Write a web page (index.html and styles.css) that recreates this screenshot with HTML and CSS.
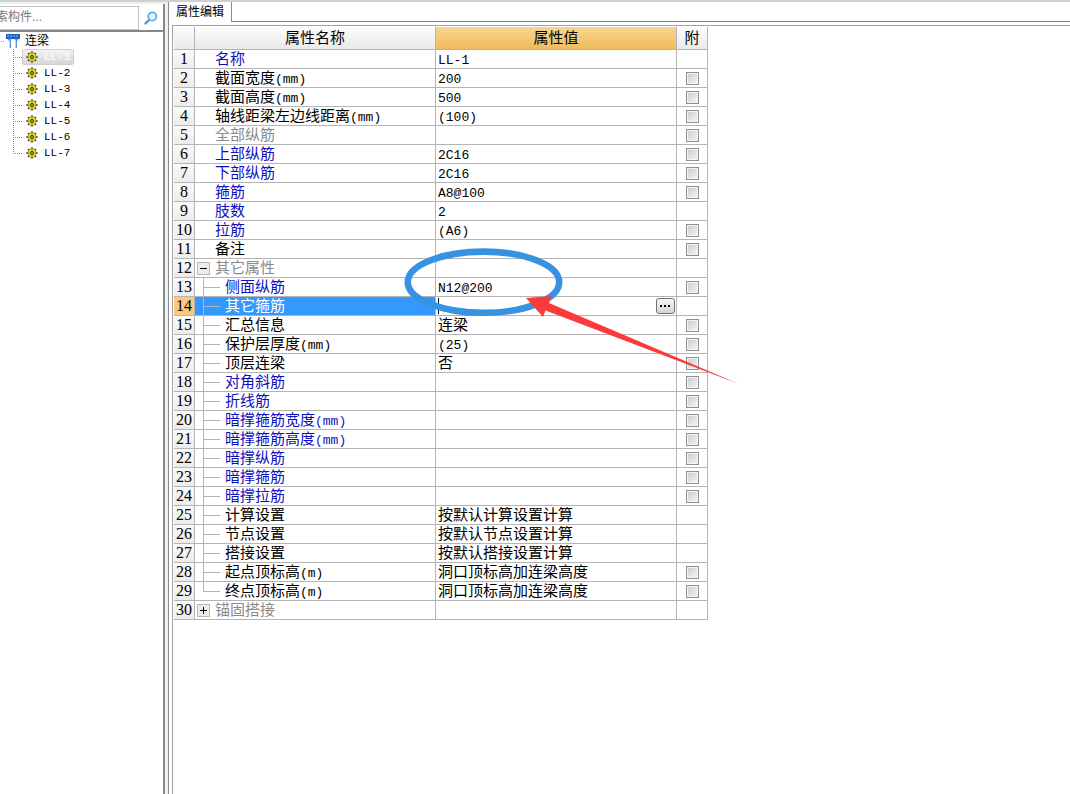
FILE: index.html
```
<!DOCTYPE html>
<html lang="zh-CN">
<head>
<meta charset="utf-8">
<title>属性编辑</title>
<link rel="stylesheet" href="styles.css">
</head>
<body>
<svg class="defs" width="0" height="0" aria-hidden="true">
  <symbol id="gear" viewBox="0 0 12 12">
    <path d="M6 0.3V11.7M0.3 6H11.7M2 2L10 10M10 2L2 10" stroke="#4a4608" stroke-width="1.5"/>
    <circle cx="6" cy="6" r="4.2" fill="#f4ea30" stroke="#6b6410" stroke-width="0.7"/>
    <path d="M6 2.2V9.8M2.2 6H9.8" stroke="#857b14" stroke-width="0.6"/>
    <rect x="4.3" y="4.3" width="3.4" height="3.4" fill="#2e2b06"/>
    <rect x="5.3" y="5.3" width="1.4" height="1.4" fill="#fff36a"/>
  </symbol>
</svg>
<div class="app">
  <aside class="side">
    <form class="search">
      <input class="search-box" type="text" placeholder="索构件..." aria-label="搜索构件">
      <button class="search-btn" type="button" aria-label="搜索">
        <svg width="14" height="14" viewBox="0 0 14 14"><path d="M1.5 12.5L5 9" stroke="#4a9bd0" stroke-width="2.4" stroke-linecap="round"/><circle cx="8.3" cy="5.5" r="4.1" fill="#e4f6fd" stroke="#5fb0df" stroke-width="1.8"/></svg>
      </button>
    </form>
    <div class="tree">
      <div class="root">
        <svg width="14" height="14" viewBox="0 0 14 14"><rect x="0" y="0" width="14" height="5" fill="#1c5fc4"/><path d="M1 2H13" stroke="#8fc3f5" stroke-dasharray="2 1"/><path d="M2 4.5H5V14H3V6.5H2ZM9 4.5H12V6.5H11V14H9Z" fill="#4f93dd"/><path d="M3.5 6V14M9.5 6V14" stroke="#b4d7f7"/></svg>
        <span>连梁</span>
      </div>
      <ul class="items">
        <li><button class="item on" type="button"><svg class="gear"><use href="#gear"/></svg>LL-1</button></li>
        <li><button class="item" type="button"><svg class="gear"><use href="#gear"/></svg>LL-2</button></li>
        <li><button class="item" type="button"><svg class="gear"><use href="#gear"/></svg>LL-3</button></li>
        <li><button class="item" type="button"><svg class="gear"><use href="#gear"/></svg>LL-4</button></li>
        <li><button class="item" type="button"><svg class="gear"><use href="#gear"/></svg>LL-5</button></li>
        <li><button class="item" type="button"><svg class="gear"><use href="#gear"/></svg>LL-6</button></li>
        <li><button class="item" type="button"><svg class="gear"><use href="#gear"/></svg>LL-7</button></li>
      </ul>
    </div>
  </aside>
  <main class="main">
    <div class="tabs"><button class="tab" type="button">属性编辑</button></div>
    <div class="pane">
      <div class="sheet">
        <table class="grid">
          <colgroup><col class="c-no"><col class="c-name"><col class="c-value"><col class="c-add"></colgroup>
          <thead><tr><th></th><th>属性名称</th><th class="active">属性值</th><th>附</th></tr></thead>
          <tbody>
            <tr><th>1</th><td class="blue">名称</td><td><i>LL-1</i></td><td></td></tr>
            <tr><th>2</th><td>截面宽度<i>(mm)</i></td><td><i>200</i></td><td><input type="checkbox" aria-label="截面宽度"></td></tr>
            <tr><th>3</th><td>截面高度<i>(mm)</i></td><td><i>500</i></td><td><input type="checkbox" aria-label="截面高度"></td></tr>
            <tr><th>4</th><td>轴线距梁左边线距离<i>(mm)</i></td><td><i>(100)</i></td><td><input type="checkbox" aria-label="轴线距梁左边线距离"></td></tr>
            <tr><th>5</th><td class="gray">全部纵筋</td><td></td><td><input type="checkbox" aria-label="全部纵筋"></td></tr>
            <tr><th>6</th><td class="blue">上部纵筋</td><td><i>2C16</i></td><td><input type="checkbox" aria-label="上部纵筋"></td></tr>
            <tr><th>7</th><td class="blue">下部纵筋</td><td><i>2C16</i></td><td><input type="checkbox" aria-label="下部纵筋"></td></tr>
            <tr><th>8</th><td class="blue">箍筋</td><td><i>A8@100</i></td><td><input type="checkbox" aria-label="箍筋"></td></tr>
            <tr><th>9</th><td class="blue">肢数</td><td><i>2</i></td><td></td></tr>
            <tr><th>10</th><td class="blue">拉筋</td><td><i>(A6)</i></td><td><input type="checkbox" aria-label="拉筋"></td></tr>
            <tr><th>11</th><td>备注</td><td></td><td><input type="checkbox" aria-label="备注"></td></tr>
            <tr><th>12</th><td class="group gray"><div><button class="toggle minus" type="button" aria-label="折叠"></button>其它属性</div></td><td></td><td></td></tr>
            <tr><th>13</th><td class="child blue">侧面纵筋</td><td><i>N12@200</i></td><td><input type="checkbox" aria-label="侧面纵筋"></td></tr>
            <tr class="selected"><th>14</th><td class="child">其它箍筋</td><td><div class="editor"><input class="edit" type="text" aria-label="其它箍筋"><button class="more" type="button" aria-label="更多"><svg width="11" height="3" viewBox="0 0 11 3"><path d="M0 0H2V2H0ZM4 0H6V2H4ZM8 0H10V2H8Z" fill="#000"/></svg></button></div></td><td></td></tr>
            <tr><th>15</th><td class="child">汇总信息</td><td>连梁</td><td><input type="checkbox" aria-label="汇总信息"></td></tr>
            <tr><th>16</th><td class="child">保护层厚度<i>(mm)</i></td><td><i>(25)</i></td><td><input type="checkbox" aria-label="保护层厚度"></td></tr>
            <tr><th>17</th><td class="child">顶层连梁</td><td>否</td><td><input type="checkbox" aria-label="顶层连梁"></td></tr>
            <tr><th>18</th><td class="child blue">对角斜筋</td><td></td><td><input type="checkbox" aria-label="对角斜筋"></td></tr>
            <tr><th>19</th><td class="child blue">折线筋</td><td></td><td><input type="checkbox" aria-label="折线筋"></td></tr>
            <tr><th>20</th><td class="child blue">暗撑箍筋宽度<i>(mm)</i></td><td></td><td><input type="checkbox" aria-label="暗撑箍筋宽度"></td></tr>
            <tr><th>21</th><td class="child blue">暗撑箍筋高度<i>(mm)</i></td><td></td><td><input type="checkbox" aria-label="暗撑箍筋高度"></td></tr>
            <tr><th>22</th><td class="child blue">暗撑纵筋</td><td></td><td><input type="checkbox" aria-label="暗撑纵筋"></td></tr>
            <tr><th>23</th><td class="child blue">暗撑箍筋</td><td></td><td><input type="checkbox" aria-label="暗撑箍筋"></td></tr>
            <tr><th>24</th><td class="child blue">暗撑拉筋</td><td></td><td><input type="checkbox" aria-label="暗撑拉筋"></td></tr>
            <tr><th>25</th><td class="child">计算设置</td><td>按默认计算设置计算</td><td></td></tr>
            <tr><th>26</th><td class="child">节点设置</td><td>按默认节点设置计算</td><td></td></tr>
            <tr><th>27</th><td class="child">搭接设置</td><td>按默认搭接设置计算</td><td></td></tr>
            <tr><th>28</th><td class="child">起点顶标高<i>(m)</i></td><td>洞口顶标高加连梁高度</td><td><input type="checkbox" aria-label="起点顶标高"></td></tr>
            <tr><th>29</th><td class="child last">终点顶标高<i>(m)</i></td><td>洞口顶标高加连梁高度</td><td><input type="checkbox" aria-label="终点顶标高"></td></tr>
            <tr><th>30</th><td class="group gray"><div><button class="toggle plus" type="button" aria-label="展开"></button>锚固搭接</div></td><td></td><td></td></tr>
          </tbody>
        </table>
        <svg class="mark" width="336" height="138" viewBox="404 248 336 138" aria-hidden="true">
          <ellipse cx="483.5" cy="282.2" rx="75.7" ry="30.6" fill="none" stroke="#3792e2" stroke-width="6.6"/>
          <path d="M526 298L552 296L549 303L739 384L545.5 310.5L543 317Z" fill="#fb3b3b"/>
        </svg>
      </div>
    </div>
  </main>
</div>
</body>
</html>
```
FILE: styles.css
```
* { box-sizing: border-box; }
body {
  margin: 0;
  background: #fff;
  color: #000;
  font: 12px/16px "Liberation Sans", "Noto Sans CJK SC", sans-serif;
}
button, input { margin: 0; padding: 0; border: 0; background: none; font: inherit; color: inherit; }
.defs { position: absolute; }
.app {
  display: flex;
  min-height: 100vh;
  border-top: 2px solid #d0d0d0;
  background: #f0f0f0;
}

/* component tree */
.side {
  flex: 0 0 165px;
  display: flex;
  flex-direction: column;
  margin-top: 2px;
  border-right: 2px solid #878b90;
  background: #fff;
}
.search {
  display: flex;
  height: 28px;
  padding-top: 2px;
  border-bottom: 2px solid #82878c;
}
.search-box {
  flex: 0 0 139px;
  min-width: 0;
  height: 24px;
  padding-bottom: 2px;
  border: 1px solid #c4c4c4;
  border-left: 0;
  text-indent: -4px;
  outline: 0;
}
.search-box::placeholder { color: #777; opacity: 1; }
.search-btn { flex: 1; display: flex; align-items: center; justify-content: center; }
.tree { padding-top: 1px; }
.root {
  display: flex;
  align-items: center;
  gap: 5px;
  height: 16px;
  padding-left: 6px;
  background: repeating-linear-gradient(90deg, #999 0 1px, transparent 1px 2px) 1px 8px / 4px 1px no-repeat;
}
.items {
  margin: 0 0 0 13px;
  padding: 0;
  list-style: none;
}
.items li {
  height: 16px;
  padding-left: 9px;
  background:
    repeating-linear-gradient(#888 0 1px, transparent 1px 2px) 0 0 / 1px 16px no-repeat,
    repeating-linear-gradient(90deg, #888 0 1px, transparent 1px 2px) 0 8px / 10px 1px no-repeat;
}
.items li:last-child {
  background-size: 1px 9px, 10px 1px;
}
.item {
  display: flex;
  align-items: center;
  gap: 6px;
  height: 16px;
  padding: 0 3px;
  border: 1px solid transparent;
  border-radius: 2px;
  font: 11px/14px "Liberation Mono", monospace;
}
.item.on {
  border-color: #cfcfcf;
  background: linear-gradient(#f4f4f4, #d6d6d6);
  color: #fff;
}
.gear { width: 12px; height: 12px; }

/* property editor */
.main {
  flex: 1;
  min-width: 0;
  display: flex;
  flex-direction: column;
  margin-left: 3px;
  border-left: 1px solid #868b90;
  background: #fff;
}
.tabs { display: flex; height: 20px; }
.tabs::after { content: ""; flex: 1; border-bottom: 1px solid #868b90; }
.tab {
  width: 63px;
  border-right: 1px solid #868b90;
  font-size: 12px;
}
.pane {
  flex: 1;
  margin: 3px 0 0 3px;
  padding: 1px 0 0 1px;
  border: solid #a0a0a0;
  border-width: 1px 0 0 1px;
}
.sheet { position: relative; }
.grid {
  table-layout: fixed;
  width: 534px;
  border-collapse: separate;
  border-spacing: 0;
  font: 15px/18px "Liberation Sans", "Noto Sans CJK SC", sans-serif;
}
.c-no { width: 21px; }
.c-name, .c-value { width: 241px; }
.c-add { width: 31px; }
.grid th, .grid td {
  height: 19px;
  padding: 0 0 0 2px;
  border: solid #b4b4b4;
  border-width: 0 1px 1px 0;
  font-weight: normal;
  text-align: left;
  white-space: nowrap;
}
.grid i { font: 13px/1 "Liberation Mono", monospace; }
.grid thead th {
  height: 23px;
  padding: 0;
  background: linear-gradient(#fdfdfd, #e9e9e9);
  text-align: center;
}
.grid thead .active { background: linear-gradient(#f8d594, #f0bb5b); }
.grid tbody th {
  padding: 0;
  background: linear-gradient(#fafafa, #ececec);
  font: 16px/18px "Liberation Serif", serif;
  text-align: center;
}
.grid td:nth-child(2) { padding-left: 20px; }
.grid td:nth-child(4) { padding: 0; text-align: center; }
.grid td.blue { color: #0f0fc0; }
.grid td.gray { color: #8a8a8a; }
.grid td.child {
  padding-left: 30px;
  background:
    linear-gradient(#b4b4b4, #b4b4b4) 8px 0 / 1px 19px no-repeat,
    linear-gradient(#b4b4b4, #b4b4b4) 8px 9px / 17px 1px no-repeat;
}
.grid td.last { background-size: 1px 9px, 17px 1px; }
.grid td.group { padding-left: 2px; }
.group div { display: flex; align-items: center; gap: 5px; }
.toggle {
  width: 13px;
  height: 13px;
  border: 1px solid #b8b8b8;
}
.minus { background: linear-gradient(#000, #000) center / 7px 1px no-repeat, #ececec; }
.plus {
  background:
    linear-gradient(#000, #000) center / 7px 1px no-repeat,
    linear-gradient(#000, #000) center / 1px 7px no-repeat,
    #ececec;
}
.grid .selected th { background: #fbc87c; }
.grid .selected .child { background-color: #3399ff; color: #fff; }
.editor { display: flex; align-items: center; height: 18px; padding-right: 1px; }
.edit {
  flex: 1;
  min-width: 0;
  height: 16px;
  outline: 0;
  background: linear-gradient(#000, #000) 0 0 / 1px 16px no-repeat;
}
.more {
  display: flex;
  align-items: center;
  justify-content: center;
  width: 19px;
  height: 16px;
  border: 1px solid #707070;
  border-radius: 3px;
  background: linear-gradient(#f6f6f6, #d4d4d4);
}
.grid input[type="checkbox"] {
  appearance: none;
  display: block;
  width: 13px;
  height: 13px;
  margin: 0 auto;
  border: 1px solid #8e8f8f;
  background: linear-gradient(135deg, #c8cacc, #f6f6f6);
  box-shadow: inset 0 0 0 1px #f4f4f4;
}
.mark { position: absolute; left: 230px; top: 221px; }
```
